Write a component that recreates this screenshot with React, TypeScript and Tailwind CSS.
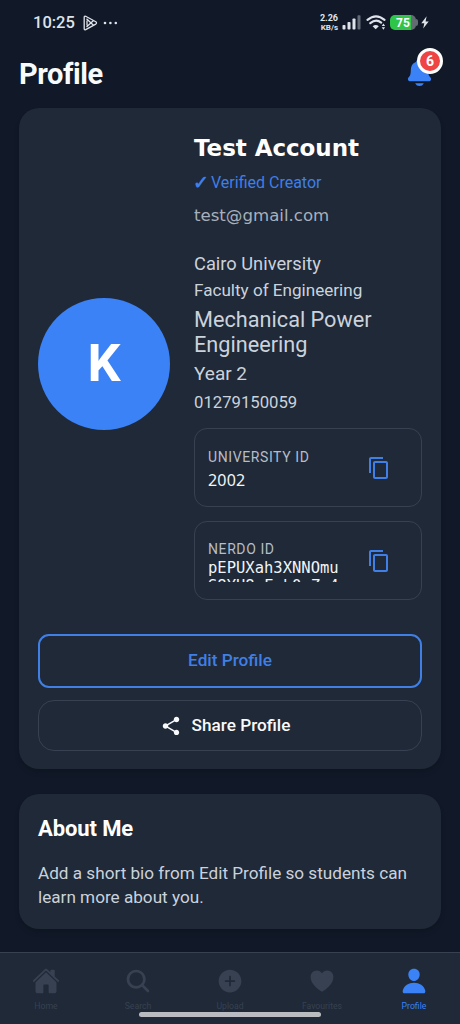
import { IoAddCircle, IoHeart, IoHome, IoNotifications, IoPerson, IoSearch } from 'react-icons/io5';
import { MdContentCopy, MdShare } from 'react-icons/md';

const TABS = [
  { label: 'Home', icon: IoHome },
  { label: 'Search', icon: IoSearch },
  { label: 'Upload', icon: IoAddCircle },
  { label: 'Favourites', icon: IoHeart },
  { label: 'Profile', icon: IoPerson, active: true },
];

function StatusBar() {
  return (
    <div className="flex h-11 items-center justify-between pt-px pr-[31px] pl-[33px] text-[#dfe3ea]">
      <div className="flex items-center pt-px">
        <span className="text-[16.5px] leading-5 font-medium">10:25</span>
        <svg className="ml-2 h-4 w-[15px]" viewBox="0 0 15 16" fill="none" stroke="currentColor" strokeWidth="1.3" strokeLinejoin="round">
          <path d="M1.2 2.2Q1.3.8 2.7 1.3L12.8 6.8Q14.2 8 12.8 9.1L2.7 14.6Q1.3 15.2 1.2 13.8Z" />
          <path d="M3.5 3.8 10.5 10.3M3.5 12 10.5 5.5M4 5.5v5" />
        </svg>
        <svg className="ml-[5px] h-1 w-[15px]" viewBox="0 0 15 4" fill="currentColor">
          <circle cx="2" cy="2" r="1.3" />
          <circle cx="7.4" cy="2" r="1.3" />
          <circle cx="12.8" cy="2" r="1.3" />
        </svg>
      </div>
      <div className="flex items-center">
        <div className="flex flex-col items-end leading-[10px] font-bold">
          <span className="text-[9px]">2.26</span>
          <span className="text-[8px]">KB/s</span>
        </div>
        <svg className="ml-1 h-[15px] w-[19px]" viewBox="0 0 19 15" fill="currentColor">
          <rect x="0.5" y="10" width="3" height="4.5" rx="0.8" />
          <rect x="5.5" y="7" width="3" height="7.5" rx="0.8" />
          <rect x="10.5" y="3.5" width="3" height="11" rx="0.8" />
          <rect x="15.5" y="0.3" width="3" height="14.2" rx="0.8" opacity="0.4" />
        </svg>
        <svg className="ml-[5px] h-[15px] w-5" viewBox="0 0 20 15" fill="none" stroke="currentColor" strokeWidth="2.2" strokeLinecap="round">
          <path d="M1.5 4.8Q10-2.2 18.5 4.8" />
          <path d="M4.3 8.2Q10 3.6 15.2 7.6" />
          <path d="M9.7 14.3 6.6 11.2Q9.7 8.6 12.8 11.2Z" fill="currentColor" stroke="none" />
          <path d="M15.7 11 17.4 8.6 19.1 11ZM15.7 12.3 17.4 14.7 19.1 12.3Z" fill="currentColor" stroke="none" />
        </svg>
        <div className="ml-1 flex items-center">
          <div className="flex h-[15px] w-[26px] items-center justify-center rounded-[5px] bg-linear-to-r from-[#2fc548] from-80% to-[#626a72] to-80% text-[12px] leading-none font-bold text-white">
            75
          </div>
          <div className="h-[7px] w-0.5 rounded-r-full bg-[#626a72]" />
        </div>
        <svg className="ml-[3px] h-[13px] w-2" viewBox="0 0 8 13" fill="currentColor">
          <path d="M5.6.3.3 7.2h3L2.2 12.6 7.7 5.4H4.6Z" />
        </svg>
      </div>
    </div>
  );
}

function Header() {
  return (
    <header className="flex h-16 items-center justify-between pr-[25px] pl-[19px]">
      <h1 className="-mt-1 text-[29px] leading-8 font-bold tracking-[-0.4px] text-[#f8fafc]">Profile</h1>
      <div className="relative -mt-2">
        <IoNotifications className="size-[31px] text-[#3b82f6]" />
        <span className="absolute -top-[9px] left-[13px] flex size-[26px] items-center justify-center rounded-full border-3 border-white bg-[#ef4444] text-[14px] leading-none font-bold text-white">
          6
        </span>
      </div>
    </header>
  );
}

interface IdBoxProps {
  label: string;
  value: string;
  numeric?: boolean;
}

function IdBox({ label, value, numeric }: IdBoxProps) {
  return (
    <div className="flex h-[79px] items-center rounded-[13px] border border-[#374151] pr-[30px] pl-[13px]">
      <div className={numeric ? 'w-[136px] pt-1' : 'w-[136px]'}>
        <div className="text-[14px] leading-[21px] tracking-[0.6px] text-[#b6bdc8]">{label}</div>
        <div
          className={
            numeric
              ? "font-['Noto_Sans',sans-serif] text-[16px] leading-[25px] tracking-[0.2px] text-[#f1f5f9]"
              : "-mt-px max-h-[23px] overflow-hidden font-['DejaVu_Sans_Mono',monospace] text-[15.5px] leading-[18px] break-all text-[#f1f5f9]"
          }
        >
          {value}
        </div>
      </div>
      <MdContentCopy className="ml-auto size-6 text-[#3f7fe6]" />
    </div>
  );
}

function ProfileCard() {
  return (
    <section className="rounded-[20px] bg-[#1f2937] px-[19px] pt-[25px] pb-[18px] shadow-md">
      <div className="flex items-center">
        <div className="-mt-1.5 flex size-[132px] shrink-0 items-center justify-center rounded-full bg-[#3b82f6] text-[52px] leading-none font-bold text-white">
          K
        </div>
        <div className="ml-6 w-[228px] shrink-0 text-[#cbd2dc]">
          <h2 className="font-['DejaVu_Sans',sans-serif] text-[23px] leading-[30px] font-bold tracking-[-0.05px] text-white">
            Test Account
          </h2>
          <div className="mt-2.5 flex h-5 items-center text-[16px] leading-5 text-[#3f7fe6]">
            <span className="-ml-px w-[18px] text-[19px] font-bold">✓</span>
            <span>Verified Creator</span>
          </div>
          <div className="mt-3 font-['DejaVu_Sans',sans-serif] text-[16.6px] leading-[22px] text-[#a8b0bd]">test@gmail.com</div>
          <div className="mt-[25px] text-[18.3px] leading-6">Cairo University</div>
          <div className="mt-[3px] text-[17.1px] leading-[22px]">Faculty of Engineering</div>
          <div className="mt-1.5 text-[21.7px] leading-[25px]">Mechanical Power Engineering</div>
          <div className="mt-[5px] text-[19px] leading-6">Year 2</div>
          <div className="mt-1.5 text-[16.7px] leading-[22px]">01279150059</div>
          <div className="mt-3.5 flex flex-col gap-3.5 pb-px">
            <IdBox label="UNIVERSITY ID" value="2002" numeric />
            <IdBox label="NERDO ID" value="pEPUXah3XNNOmuS8YU8oFok0oZo4" />
          </div>
        </div>
      </div>
      <button className="mt-[33px] flex h-[54px] w-full items-center justify-center rounded-[11px] border-[2.5px] border-[#3f7fe6] text-[17.2px] font-medium text-[#3f7fe6]">
        Edit Profile
      </button>
      <button className="mt-3 flex h-[51px] w-full items-center justify-center gap-2.5 rounded-2xl border border-[#374151] pr-2.5 text-[17.2px] font-medium text-[#f8fafc]">
        <MdShare className="size-[22px]" />
        Share Profile
      </button>
    </section>
  );
}

function AboutCard() {
  return (
    <section className="mt-[25px] h-[135px] rounded-[20px] bg-[#1f2937] px-[19px] pt-[22px] shadow-md">
      <h2 className="text-[22px] leading-[26px] font-bold tracking-[-0.1px] text-white">About Me</h2>
      <p className="mt-[19px] text-[17.15px] leading-6 text-[#cbd2dc]">Add a short bio from Edit Profile so students can learn more about you.</p>
    </section>
  );
}

function TabBar() {
  return (
    <nav className="relative flex h-[72px] border-t border-[#374151] bg-[#1f2937] pt-3.5">
      {TABS.map(({ label, icon: Icon, active }) => (
        <div
          key={label}
          className={`flex flex-1 flex-col items-center ${active ? 'text-[#3b82f6]' : 'text-[#374151]'}`}
        >
          <Icon className="size-7" />
          <span className="mt-[5px] text-[8.7px] leading-3">{label}</span>
        </div>
      ))}
      {/* Gesture handle */}
      <div className="absolute bottom-[7px] left-[139px] h-[5px] w-[182px] rounded-full bg-[#b9bcc1]" />
    </nav>
  );
}

export default function App() {
  return (
    <div className="flex h-[1024px] w-[460px] flex-col overflow-hidden bg-[#111827] font-[Roboto,sans-serif]">
      <StatusBar />
      <Header />
      <main className="flex-1 px-[19px]">
        <ProfileCard />
        <AboutCard />
      </main>
      <TabBar />
    </div>
  );
}
